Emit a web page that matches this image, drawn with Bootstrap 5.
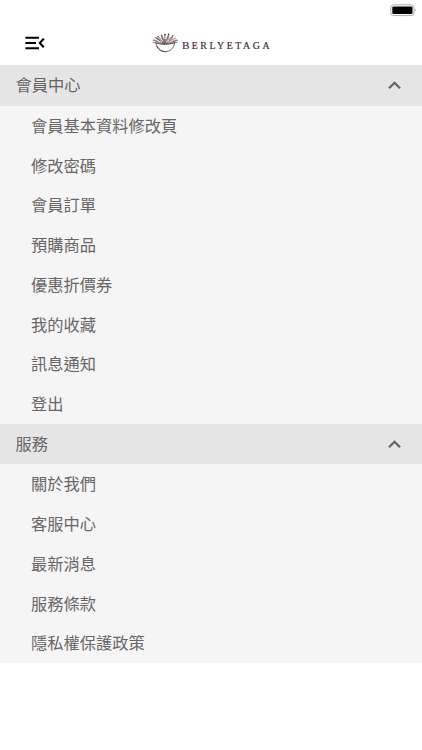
<!DOCTYPE html>
<html lang="zh-Hant">
<head>
<meta charset="utf-8">
<meta name="viewport" content="width=device-width, initial-scale=1">
<title>Berlyetaga</title>
<link href="https://cdn.jsdelivr.net/npm/bootstrap@5.3.0/dist/css/bootstrap.min.css" rel="stylesheet">
<style>
body{font-family:"Noto Sans CJK TC",sans-serif;font-size:16.25px;color:#666;line-height:24px}
.status-bar{height:21px;padding:4px 5px 0 0}
.top-bar{height:44.3px;padding:0 25px}
.brand-logo{left:152px;top:12px}
.group-head{height:40.6px;padding:0 20px 1px 15.5px;background:#e5e5e5;color:#666;font-size:inherit}
.group-head:hover{color:#666;background:#e5e5e5}
.group-head span{padding-bottom:2px}
.menu-item{height:39.75px;padding:0 0 2px 31px;background:#f5f5f5;color:#666}
.menu-item:hover,.menu-item:focus{background:#f5f5f5;color:#666}
</style>
<script src="https://cdn.jsdelivr.net/npm/bootstrap@5.3.0/dist/js/bootstrap.bundle.min.js"></script>
</head>
<body class="bg-white overflow-hidden">
<div class="status-bar d-flex justify-content-end align-items-start">
  <svg width="27" height="13" viewBox="0 0 27 13"><rect x=".8" y=".8" width="23.2" height="10.8" rx="2.8" fill="#fff" stroke="#aaa" stroke-width="1"/><rect x="2.3" y="2.4" width="20.2" height="7.6" rx="1.2"/><path d="M25.2 4.2q1.5 2 0 4z" fill="#aaa"/></svg>
</div>
<header class="top-bar position-relative d-flex align-items-center">
  <button type="button" class="btn p-0 border-0 d-flex" aria-label="選單">
    <svg width="20" height="14" viewBox="0 0 20 14" fill="none" stroke="#000" stroke-width="2.1"><path d="M.4 1.7H14M.4 7H11M.4 12.3H14M18.8 2.6 14.8 7l4 4.4"/></svg>
  </button>
  <svg class="brand-logo position-absolute" width="120" height="22" viewBox="0 0 120 22" role="img" aria-label="Berlyetaga">
    <g fill="none" stroke="#594944" stroke-width=".85" stroke-linecap="round">
      <path d="M4 10C4.5 21.8 21.5 21.8 22.6 9.8M4 10Q13 13 22.6 9.8M5.5 13.5Q8 18.9 14 18.5"/>
      <path d="M12.5 11 1 7.2M12.5 11 .8 9.4M12 10.5 3.5 4.7M12 10.5 6.5 3.7M12.5 10 9.8 3M13 10 12.8 2M13.3 10 16.4 2.6M13.5 10 20 3.4M14 10.5 23.5 5M14 10.8 25.6 7.5M14 11 25 9.4" stroke-width=".65"/>
    </g>
    <g fill="#4b3935">
      <path d="M1 6.2q4 .2 5.2 3.1Q3 9.1 1 6.2M3.2 3.8Q8 4.2 8.8 8.3 4.4 7.3 3.2 3.8M9 2.2q3.5 2 2.7 5.7Q8.5 6 9 2.2M17 1.8q1 3.8-2.2 6Q13.7 4 17 1.8M21.5 3q-.8 4-4.6 5.2Q17.4 4.2 21.5 3M25.5 6.3q-2 3-6 3.1 2-3.2 6-3.1M11.6 6l2.2 0-.5 4.8-1.6-.3z" opacity=".5"/>
      <circle cx="13" cy="1.6" r=".9"/><circle cx="9.6" cy="2.2" r=".7"/><circle cx="16.6" cy="1.4" r=".8"/><circle cx="20.7" cy="2.7" r=".7"/><circle cx="6" cy="3.4" r=".6"/>
    </g>
    <g fill="#3f302d" font-family="Liberation Serif, serif">
      <text x="30" y="16" font-size="11.2" stroke="#3f302d" stroke-width=".15">B</text>
      <text x="39.8" y="16" font-size="9.8" textLength="77.7" lengthAdjust="spacing" stroke="#3f302d" stroke-width=".2">ERLYETAGA</text>
    </g>
  </svg>
</header>
<nav>
  <button type="button" class="group-head btn rounded-0 border-0 w-100 d-flex align-items-center justify-content-between" data-bs-toggle="collapse" data-bs-target="#member" aria-expanded="true">
    <span>會員中心</span>
    <svg width="15" height="10" viewBox="0 0 15 10" fill="none" stroke="#666" stroke-width="2.3"><path d="M2 8.3 7.5 2.8 13 8.3"/></svg>
  </button>
  <div class="collapse show" id="member">
    <div class="list-group list-group-flush rounded-0">
      <a href="#" class="menu-item list-group-item-action d-flex align-items-center text-decoration-none">會員基本資料修改頁</a>
      <a href="#" class="menu-item list-group-item-action d-flex align-items-center text-decoration-none">修改密碼</a>
      <a href="#" class="menu-item list-group-item-action d-flex align-items-center text-decoration-none">會員訂單</a>
      <a href="#" class="menu-item list-group-item-action d-flex align-items-center text-decoration-none">預購商品</a>
      <a href="#" class="menu-item list-group-item-action d-flex align-items-center text-decoration-none">優惠折價券</a>
      <a href="#" class="menu-item list-group-item-action d-flex align-items-center text-decoration-none">我的收藏</a>
      <a href="#" class="menu-item list-group-item-action d-flex align-items-center text-decoration-none">訊息通知</a>
      <a href="#" class="menu-item list-group-item-action d-flex align-items-center text-decoration-none">登出</a>
    </div>
  </div>
  <button type="button" class="group-head btn rounded-0 border-0 w-100 d-flex align-items-center justify-content-between" data-bs-toggle="collapse" data-bs-target="#service" aria-expanded="true">
    <span>服務</span>
    <svg width="15" height="10" viewBox="0 0 15 10" fill="none" stroke="#666" stroke-width="2.3"><path d="M2 8.3 7.5 2.8 13 8.3"/></svg>
  </button>
  <div class="collapse show" id="service">
    <div class="list-group list-group-flush rounded-0">
      <a href="#" class="menu-item list-group-item-action d-flex align-items-center text-decoration-none">關於我們</a>
      <a href="#" class="menu-item list-group-item-action d-flex align-items-center text-decoration-none">客服中心</a>
      <a href="#" class="menu-item list-group-item-action d-flex align-items-center text-decoration-none">最新消息</a>
      <a href="#" class="menu-item list-group-item-action d-flex align-items-center text-decoration-none">服務條款</a>
      <a href="#" class="menu-item list-group-item-action d-flex align-items-center text-decoration-none">隱私權保護政策</a>
    </div>
  </div>
</nav>
</body>
</html>
